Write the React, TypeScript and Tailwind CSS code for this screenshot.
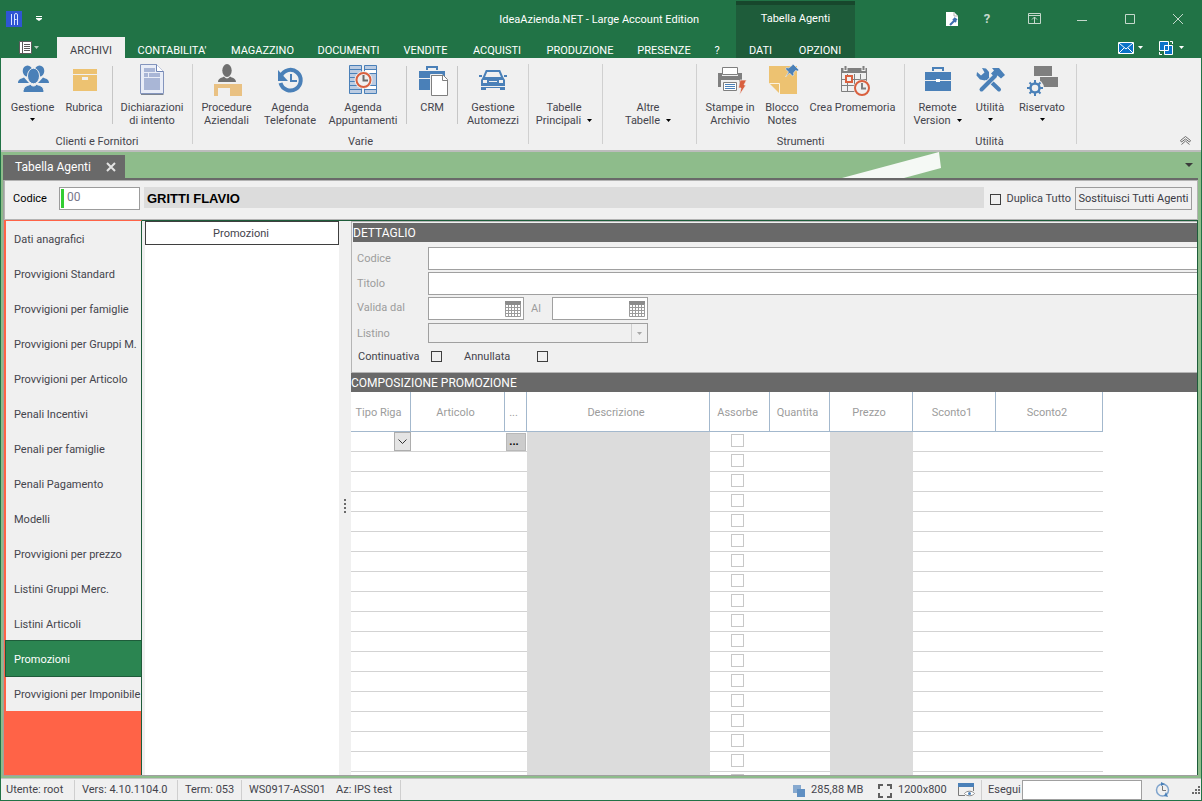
import React from 'react';
import clsx from 'clsx';

const BLUE = '#4a80b8';
const GRAY = '#7f7f7f';
const SAND = '#edc271';
const RED = '#d9603f';

const TABS = [
  { label: 'ARCHIVI', width: 'w-[68px]' },
  { label: "CONTABILITA'", width: 'w-[94px]' },
  { label: 'MAGAZZINO', width: 'w-[87px]' },
  { label: 'DOCUMENTI', width: 'w-[85px]' },
  { label: 'VENDITE', width: 'w-[69px]' },
  { label: 'ACQUISTI', width: 'w-[74px]' },
  { label: 'PRODUZIONE', width: 'w-[92px]' },
  { label: 'PRESENZE', width: 'w-[76px]' },
  { label: '?', width: 'w-[30px]' },
];

const SIDEBAR = [
  'Dati anagrafici', 'Provvigioni Standard', 'Provvigioni per famiglie', 'Provvigioni per Gruppi M.',
  'Provvigioni per Articolo', 'Penali Incentivi', 'Penali per famiglie', 'Penali Pagamento', 'Modelli',
  'Provvigioni per prezzo', 'Listini Gruppi Merc.', 'Listini Articoli', 'Promozioni', 'Provvigioni per Imponibile',
];

const COLUMNS = [
  { label: 'Tipo Riga', width: 'w-[60px]' },
  { label: 'Articolo', width: 'w-[94px]' },
  { label: '...', width: 'w-[22px]' },
  { label: 'Descrizione', width: 'w-[183px]' },
  { label: 'Assorbe', width: 'w-[60px]' },
  { label: 'Quantita', width: 'w-[60px]' },
  { label: 'Prezzo', width: 'w-[83px]' },
  { label: 'Sconto1', width: 'w-[83px]' },
  { label: 'Sconto2', width: 'w-[107px]' },
];

const ROWS = Array.from({ length: 18 }, (_, i) => i);

const Svg = ({ size = 32, children }: { size?: number; children: React.ReactNode }) => (
  <svg width={size} height={size} viewBox={`0 0 ${size} ${size}`} fill="none" className="shrink-0 overflow-visible" aria-hidden="true">
    {children}
  </svg>
);

const Caret = ({ className }: { className?: string }) => (
  <svg width="5" height="3" viewBox="0 0 5 3" className={clsx('inline-block shrink-0 fill-current', className)} aria-hidden="true">
    <path d="M0 0h5L2.5 3z" />
  </svg>
);

const PeopleIcon = () => (
  <Svg>
    <g fill={BLUE}>
      <ellipse cx="10.5" cy="7" rx="4.8" ry="5.5" />
      <ellipse cx="22.5" cy="7" rx="4.8" ry="5.5" />
      <path d="M1 19c0-4 3-4 6-5.500l5 5.500zM32 19c0-4-3-4-6-5.500l-5 5.500z" />
    </g>
    <g fill={BLUE} stroke="#f0f0f0">
      <path d="M6 28.500c0-6 4-7 7.500-8 2 2 4 2 6 0 4 1 7.500 2 7.500 8z" />
      <ellipse cx="16.500" cy="12" rx="6" ry="7.800" />
    </g>
  </Svg>
);

const BoxIcon = () => (
  <Svg>
    <path d="M5 5h24v5H5zM5 11h24v16H5zM14 13v3h6v-3z" fill={SAND} fillRule="evenodd" />
  </Svg>
);

const DocumentIcon = () => (
  <Svg>
    <path d="M4.500.5h16l7 7v22h-23z" fill="#e9edf7" stroke="#8495bd" />
    <path d="M20.500.5v7h7" fill="#fff" stroke="#6f84b5" />
    <path d="M8 4h11v4H8zM8 9h4v4H8zM13 9h11v4H13zM8 14h16v12H8z" fill="#a9b6d6" />
    <path d="M5 30.500h22.500" stroke="#7b8491" />
  </Svg>
);

const DeskIcon = () => (
  <Svg>
    <path d="M7 18c0-4 4-4 6-5.500 2 2.500 4 2.500 6 0 2 1.500 6 1.500 6 5.500z" fill="#6f6f6f" />
    <ellipse cx="16" cy="6.500" rx="4.700" ry="6.500" fill="#6f6f6f" />
    <path d="M3 20h28v12H19v-8H7v8H3z" fill="#e9c183" />
  </Svg>
);

const RecallIcon = () => (
  <Svg>
    <path d="M7 12a10.300 10.300 0 1 1-.5 7" stroke={BLUE} strokeWidth="4" />
    <path d="M4 6v11h10z" fill={BLUE} />
    <path d="M17 10v7h6" stroke={BLUE} strokeWidth="2" />
  </Svg>
);

const ScheduleIcon = () => (
  <Svg>
    <path d="M2.500 1.500h12v28h-12zM17.500 1.500h12v28h-12z" fill="#bccce2" stroke={BLUE} />
    <path d="M3 5.500h11M3 9.500h11M3 13.500h11M3 17.500h11M3 21.500h11M3 25.500h11M18 5.500h11M18 9.500h11M18 21.500h11M18 25.500h11" stroke={BLUE} />
    <path d="M18 6h11v3H18zM18 22h11v3H18z" fill="#fff" />
    <circle cx="16.500" cy="16" r="9" fill="#f0f0f0" />
    <circle cx="16.500" cy="16" r="7" fill="#f0f0f0" stroke={RED} strokeWidth="2" />
    <path d="M16.500 11v5.500H21" stroke="#6b6b6b" strokeWidth="2" />
  </Svg>
);

const CrmIcon = () => (
  <Svg>
    <path d="M11 6V3h10v3" stroke={BLUE} strokeWidth="2" />
    <path d="M3 7h26v7H3zM3 15h26v11H3z" fill={BLUE} />
    <path d="M15.500 11.500h12l4 4v16h-16z" fill="#fff" stroke={GRAY} />
    <path d="M14.500 32V10.500h12" stroke="#f0f0f0" />
    <path d="M26.500 11.500v5h5" stroke={GRAY} />
  </Svg>
);

const CarIcon = () => (
  <Svg>
    <path d="M6.500 14l3-7h13l3 7" stroke={BLUE} strokeWidth="2" />
    <path d="M2 11h3v2H2zM27 11h3v2h-3z" fill={BLUE} />
    <path d="M6 13h20l2 3v6H4v-6z" fill={BLUE} />
    <path d="M6 16h4v3H6zM22 16h4v3h-4zM12 17h8v1h-8z" fill="#f0f0f0" />
    <path d="M4 23h24v3h-5v-2H9v2H4z" fill={BLUE} />
  </Svg>
);

const PrinterIcon = () => (
  <Svg>
    <path d="M4 9h4v3h16V9h4v14H4z" fill={GRAY} />
    <path d="M8.500 3.500h15v7h-15z" fill="#fff" stroke={GRAY} />
    <path d="M8.500 17.500h15v9h-15z" fill="#fff" stroke="#f0f0f0" strokeWidth="3" />
    <path d="M9.500 18.500h13v8h-13z" fill="#fff" stroke={GRAY} />
    <path d="M11 20.500h10M11 22.500h10M11 24.500h10" stroke={BLUE} />
    <path d="M26 16h6.500l-2.500 5h2l-6.500 10 1.500-7h-2.500z" fill={RED} stroke="#f0f0f0" strokeWidth=".7" />
  </Svg>
);

const NoteIcon = () => (
  <Svg>
    <path d="M3 2h28v28H14L3 19z" fill={SAND} />
    <path d="M3.500 19.500h10V30" stroke="#fbf3e2" />
    <path d="M27 0l6 6-1.500 1-2-.5-2 2.500.5 2-1.500 1-3-3-4 4 3-5-3-3 1-1.500 2 .5 3-2z" fill={BLUE} stroke="#f0f0f0" strokeWidth=".6" />
  </Svg>
);

const ReminderIcon = () => (
  <Svg>
    <path d="M4 4h26v5H4z" fill={GRAY} />
    <path d="M8.500 1v6M26.500 1v6" stroke="#f0f0f0" strokeWidth="4" />
    <path d="M8.500 2v4M26.500 2v4" stroke={GRAY} strokeWidth="2" />
    <path d="M4.500 9v18.500h25V9M10.500 10v17M17.500 10v17M23.500 10v17M5 15.500h25M5 21.500h25" stroke={GRAY} />
    <path d="M9 12h6v6H9z" fill="#f0f0f0" stroke={RED} strokeWidth="2" />
    <circle cx="25" cy="24" r="8.500" fill="#f0f0f0" />
    <circle cx="25" cy="24" r="7" fill="#f0f0f0" stroke={RED} strokeWidth="2" />
    <path d="M25 19v5.500h4" stroke={GRAY} strokeWidth="2" />
  </Svg>
);

const BriefcaseIcon = () => (
  <Svg>
    <path d="M11 7V4h10v3" stroke={BLUE} strokeWidth="2" />
    <path d="M3 8h26v19H3z" fill={BLUE} />
    <path d="M3 16.500h26" stroke="#f0f0f0" />
    <path d="M14 15h4v3h-4z" fill="#fff" />
  </Svg>
);

const ToolsIcon = () => (
  <Svg>
    <path d="M12 13l13 12.500" stroke={BLUE} strokeWidth="4" strokeLinecap="round" />
    <path d="M8 4l4 .5 3 3.500v5l-4 3.500-5-1-3.500-4L3 8l4 3.500 3.500-3z" fill={BLUE} />
    <path d="M22 11L7 26" stroke="#f0f0f0" strokeWidth="6" />
    <path d="M21 12L7.500 25.500" stroke={BLUE} strokeWidth="4" strokeLinecap="round" />
    <path d="M18 4h7l6 7-4 3.500-3.500-3-2.500 2-4-4 3-3z" fill={BLUE} />
  </Svg>
);

const ReservedIcon = () => (
  <Svg>
    <path d="M8 2h18v10H8zM14 13h18v10H14z" fill={GRAY} />
    <circle cx="9" cy="24" r="9" fill="#f0f0f0" />
    <circle cx="9" cy="24" r="4.500" stroke={BLUE} strokeWidth="2.500" />
    <path d="M9 16v3M9 29v3M1 24h3M14 24h3M3.500 18.500l2 2M12.500 27.500l2 2M14.500 18.500l-2 2M5.500 27.500l-2 2" stroke={BLUE} strokeWidth="2" />
  </Svg>
);

interface ItemProps {
  icon?: React.ReactNode;
  lines: string[];
  width: string;
  menu?: 'inline' | 'below';
}

const RibbonItem: React.FC<ItemProps> = ({ icon, lines, width, menu }) => (
  <button type="button" className={clsx('flex shrink-0 flex-col items-center pt-1.5', width)}>
    <span className="h-8 w-8">{icon}</span>
    <span className="mt-[5px] text-center leading-[13px]">
      {lines.map((line, i) => (
        <span key={line} className="block whitespace-nowrap">
          {line}
          {menu === 'inline' && i === lines.length - 1 && <Caret className="mb-0.5 ml-1.5 text-black" />}
        </span>
      ))}
    </span>
    {menu === 'below' && <Caret className="mt-1 text-black" />}
  </button>
);

const Divider = () => <div className="mx-[3px] mt-2 h-[58px] w-px shrink-0 bg-[#c6c6c6]" />;

const RibbonGroup = ({ label, className, children }: { label?: string; className?: string; children: React.ReactNode }) => (
  <section className="flex shrink-0">
    <div className={clsx('flex flex-col', className)}>
      <div className="flex h-[77px]">{children}</div>
      <div className="text-center leading-[13px]">{label}</div>
    </div>
    <div className="mt-1.5 h-20 w-px bg-[#d0d0d0]" />
  </section>
);

const TitleBar = () => (
  <header className="flex h-[58px] shrink-0 bg-[#217346] pl-px text-white">
    <div className="flex shrink-0 flex-col">
      <div className="flex h-[37px] items-center justify-between pr-[37px] pl-[5px]">
        <div className="flex items-center gap-3">
          <Svg size={16}>
            <path d="M0 0h16v16H0z" fill="#2f55d4" />
            <path d="M5.500 3v11M8.500 14V4a1.500 1.500 0 0 1 3 0v10M8.500 8.500h2" stroke="#dce4ff" />
          </Svg>
          <button type="button" aria-label="Personalizza barra" className="p-0.5">
            <Svg size={6}>
              <path d="M0 0h6v1H0zM0 2h6v1L3 5 0 3z" fill="#fff" />
            </Svg>
          </button>
        </div>
        <h1 className="pt-1">IdeaAzienda.NET - Large Account Edition</h1>
      </div>
      <nav className="flex h-[21px] pr-1">
        <button type="button" aria-label="File" className="flex w-14 items-center justify-center gap-0.5">
          <Svg size={13}>
            <path d="M.5.5h12v12H.5z" fill="#fff" stroke="#5b5b5b" />
            <path d="M3.500 1v11M5 3.500h6M5 5.500h6M5 7.500h6M5 9.500h6" stroke="#5b5b5b" />
          </Svg>
          <Caret className="text-[#b5cfbf]" />
        </button>
        {TABS.map((tab, i) => (
          <button
            key={tab.label}
            type="button"
            className={clsx('pt-1.5 whitespace-nowrap', tab.width, i === 0 && 'bg-[#f0f0f0] text-[#3f3f46]')}
          >
            {tab.label}
          </button>
        ))}
      </nav>
    </div>
    <div className="mt-px flex shrink-0 flex-col border-t-4 border-[#17472c] bg-[#1e5c3a]">
      <div className="flex h-8 items-center justify-center pb-1">Tabella Agenti</div>
      <div className="flex h-[21px]">
        <button type="button" className="w-[49px] pt-1.5">DATI</button>
        <button type="button" className="w-[70px] pt-1.5">OPZIONI</button>
      </div>
    </div>
    <div className="flex flex-1 flex-col items-end">
      <div className="flex h-[37px] items-center text-[#c5d8cc]">
        <button type="button" aria-label="Impostazioni" className="flex w-9 justify-center">
          <Svg size={13}>
            <path d="M1 0h8l4 4v10H1z" fill="#fff" />
            <path d="M9 0v4h4" stroke="#b5b5b5" />
            <path d="M5 13l5-5M8 7l3 3M9 6l3 2" stroke="#3f6fb0" strokeWidth="2" />
          </Svg>
        </button>
        <button type="button" aria-label="Aiuto" className="w-9 text-[13px] font-bold">?</button>
        <button type="button" aria-label="Barra multifunzione" className="flex w-[58px] justify-center">
          <Svg size={13}>
            <path d="M.5 1.500h12v10H.5zM0 3.500h13M6.500 11V5M4 7.500L6.500 5 9 7.500" stroke="currentColor" />
          </Svg>
        </button>
        <button type="button" aria-label="Riduci" className="flex w-[38px] justify-center">
          <Svg size={10}><path d="M0 6.500h10" stroke="currentColor" /></Svg>
        </button>
        <button type="button" aria-label="Ingrandisci" className="flex w-[58px] justify-center">
          <Svg size={10}><path d="M.5.5h9v9h-9z" stroke="currentColor" /></Svg>
        </button>
        <button type="button" aria-label="Chiudi" className="flex w-[43px] justify-start pl-[14px]">
          <Svg size={10}><path d="M0 0l10 10M10 0L0 10" stroke="currentColor" /></Svg>
        </button>
      </div>
      <div className="flex h-[21px] items-center gap-4 pr-[18px]">
        <button type="button" aria-label="Posta" className="flex items-center gap-1">
          <svg width="16" height="12" viewBox="0 0 16 12" fill="none" aria-hidden="true">
            <path d="M.5.5h15v11H.5z" fill="#0a72c8" stroke="#fff" />
            <path d="M1 1l7 6 7-6M1 11l5-5M15 11l-5-5" stroke="#fff" />
          </svg>
          <Caret />
        </button>
        <button type="button" aria-label="Finestre" className="flex items-center gap-1.5">
          <Svg size={14}>
            <path d="M.5.5h9v9h-9zM5.500 4.500h8v9h-8z" fill="#0a72c8" stroke="#fff" />
            <path d="M11 .5h2.500V3M.5 11v2.500H3" stroke="#fff" />
          </Svg>
          <Caret />
        </button>
      </div>
    </div>
  </header>
);

const Ribbon = () => (
  <div className="flex h-[94px] shrink-0 justify-between border-b-2 border-[#bcbcbc] bg-[#f0f0f0]">
    <div className="flex">
      <RibbonGroup label="Clienti e Fornitori" className="pr-1 pl-[5px]">
        <RibbonItem icon={<PeopleIcon />} lines={['Gestione']} width="w-[53px]" menu="below" />
        <RibbonItem icon={<BoxIcon />} lines={['Rubrica']} width="w-[50px]" />
        <Divider />
        <RibbonItem icon={<DocumentIcon />} lines={['Dichiarazioni', 'di intento']} width="w-[72px]" />
      </RibbonGroup>
      <RibbonGroup label="Varie" className="px-[3px]">
        <RibbonItem icon={<DeskIcon />} lines={['Procedure', 'Aziendali']} width="w-[61px]" />
        <RibbonItem icon={<RecallIcon />} lines={['Agenda', 'Telefonate']} width="w-[66px]" />
        <RibbonItem icon={<ScheduleIcon />} lines={['Agenda', 'Appuntamenti']} width="w-[80px]" />
        <Divider />
        <RibbonItem icon={<CrmIcon />} lines={['CRM']} width="w-[44px]" />
        <Divider />
        <RibbonItem icon={<CarIcon />} lines={['Gestione', 'Automezzi']} width="w-[64px]" />
      </RibbonGroup>
      <RibbonGroup className="pr-[3px]">
        <RibbonItem lines={['Tabelle', 'Principali']} width="w-[70px]" menu="inline" />
      </RibbonGroup>
      <RibbonGroup className="pr-[3px]">
        <RibbonItem lines={['Altre', 'Tabelle']} width="w-[90px]" menu="inline" />
      </RibbonGroup>
      <RibbonGroup label="Strumenti" className="px-1">
        <RibbonItem icon={<PrinterIcon />} lines={['Stampe in', 'Archivio']} width="w-[58px]" />
        <RibbonItem icon={<NoteIcon />} lines={['Blocco', 'Notes']} width="w-[46px]" />
        <RibbonItem icon={<ReminderIcon />} lines={['Crea Promemoria']} width="w-[95px]" />
      </RibbonGroup>
      <RibbonGroup label="Utilità" className="pr-[7px] pl-[5px]">
        <RibbonItem icon={<BriefcaseIcon />} lines={['Remote', 'Version']} width="w-[55px]" menu="inline" />
        <RibbonItem icon={<ToolsIcon />} lines={['Utilità']} width="w-[50px]" menu="below" />
        <RibbonItem icon={<ReservedIcon />} lines={['Riservato']} width="w-[54px]" menu="below" />
      </RibbonGroup>
    </div>
    <button type="button" aria-label="Comprimi" className="flex items-end pr-2.5 pb-1">
      <Svg size={11}>
        <path d="M.5 5.500l5-4 5 4-1 1.500-4-3-4 3zM1.500 9.500l4-3.500 4 3.500" stroke="#6b6b6b" />
      </Svg>
    </button>
  </div>
);

const DocumentTabs = () => (
  <div className="flex h-7 shrink-0 items-end justify-between border-b-2 border-[#696969]">
    <button type="button" className="flex h-[23px] w-[122px] items-center justify-between bg-[#696969] pr-2.5 pl-3 text-white">
      <span className="text-[12px]">Tabella Agenti</span>
      <Svg size={8}>
        <path d="M0 0l8 8M8 0L0 8" stroke="#e4e4e4" strokeWidth="2" />
      </Svg>
    </button>
    <div className="flex gap-[244px] pr-[5px]">
      <svg width="99" height="26" viewBox="0 0 99 26" aria-hidden="true">
        <path d="M0 26L97 0l2 16-37 10z" fill="#f5f9f5" />
      </svg>
      <button type="button" aria-label="Elenco schede">
        <svg width="8" height="4" viewBox="0 0 8 4" aria-hidden="true">
          <path d="M0 0h8L4 4z" fill="#3b3b3b" />
        </svg>
      </button>
    </div>
  </div>
);

const CodeBar = () => (
  <div className="flex h-10 shrink-0 items-start border border-[#b3b3b3] bg-[#f0f0f0] pt-1.5 pr-[5px] pl-2">
    <label htmlFor="agente" className="w-[46px] pt-1 leading-4 text-black">Codice</label>
    <div className="flex h-[23px] w-[81px] border border-[#9c9c9c] bg-white p-px">
      <div className="w-[3px] shrink-0 bg-[#32cd32]" />
      <input id="agente" defaultValue="00" className="h-4 w-full min-w-0 pl-[3px] text-[12px] text-[#77778a] outline-none" />
    </div>
    <div className="mr-1.5 ml-1 h-[21px] flex-1 bg-[#dcdcdc] px-[3px] font-['Liberation_Sans'] text-[13px] leading-[23px] font-bold text-black">
      GRITTI FLAVIO
    </div>
    <label className="flex items-center gap-[5px] pt-1 pr-1 leading-4">
      <input type="checkbox" className="h-[11px] w-[11px] appearance-none border border-[#3f3f3f]" />
      Duplica Tutto
    </label>
    <button type="button" className="h-[23px] w-[117px] border border-[#9c9c9c] pt-0.5 whitespace-nowrap text-[#3a3a44]">
      Sostituisci Tutti Agenti
    </button>
  </div>
);

const Sidebar = () => (
  <nav className="w-[138px] shrink-0 border-t border-r border-l-2 border-t-[#ff6347] border-r-[#1e5c3a] border-l-[#ff6347] bg-[#ff6347]">
    {SIDEBAR.map(item => (
      <button
        key={item}
        type="button"
        className={clsx(
          'block h-[35px] w-full pt-[3px] pl-2 text-left whitespace-nowrap',
          item === 'Promozioni' ? 'bg-[#2b8551] text-white outline-1 outline-[#1e5c3a]' : 'bg-[#f0f0f0]'
        )}
      >
        {item}
      </button>
    ))}
  </nav>
);

const DateField = ({ id }: { id: string }) => (
  <div className="flex h-[23px] w-24 items-center border border-[#a0a0a0] bg-white pr-0.5">
    <input id={id} className="h-full w-full min-w-0 px-1 outline-none" />
    <button type="button" aria-label="Calendario">
      <Svg size={16}>
        <path d="M0 0h16v4H0z" fill="#8c8c8c" />
        <path d="M.5 3v12.500h15V3M3.500 4v11M6.500 4v11M9.500 4v11M12.500 4v11M1 6.500h14M1 9.500h14M1 12.500h14" stroke="#9b9b9b" />
      </Svg>
    </button>
  </div>
);

const DetailForm = () => (
  <section className="shrink-0 border-t border-b border-l border-[#b5b5b5] bg-[#f0f0f0] pb-1.5">
    <h2 className="mt-px ml-px h-[19px] bg-[#696969] text-[12px] leading-[21px] text-white">DETTAGLIO</h2>
    <div className="mt-[5px] flex flex-col gap-0.5 pl-[5px] text-[#9c9c9c]">
      <div className="flex items-center">
        <label htmlFor="codice" className="w-[71px] pt-0.5">Codice</label>
        <input id="codice" className="h-[23px] flex-1 border border-r-0 border-[#a0a0a0] bg-white px-1" />
      </div>
      <div className="flex items-center">
        <label htmlFor="titolo" className="w-[71px] pt-0.5">Titolo</label>
        <input id="titolo" className="h-[23px] flex-1 border border-r-0 border-[#a0a0a0] bg-white px-1" />
      </div>
      <div className="flex items-center">
        <label htmlFor="valida" className="w-[71px]">Valida dal</label>
        <DateField id="valida" />
        <label htmlFor="al" className="w-7 pt-0.5 pl-[7px]">Al</label>
        <DateField id="al" />
      </div>
      <div className="flex items-center pt-px">
        <label htmlFor="listino" className="w-[71px] pt-0.5">Listino</label>
        <div className="flex h-5 w-[220px] border border-[#a0a0a0]">
          <select id="listino" disabled className="flex-1 appearance-none" />
          <span className="flex w-4 items-center justify-center border-l border-[#cfcfcf] text-[#a8a8a8]">
            <Caret />
          </span>
        </div>
      </div>
      <div className="flex h-[21px] items-center pt-0.5 pl-px text-[#44444c]">
        <label htmlFor="continuativa" className="w-[73px] pt-0.5">Continuativa</label>
        <input id="continuativa" type="checkbox" className="h-[11px] w-[11px] appearance-none border border-[#3f3f3f]" />
        <label htmlFor="annullata" className="ml-[22px] w-[73px] pt-0.5">Annullata</label>
        <input id="annullata" type="checkbox" className="h-[11px] w-[11px] appearance-none border border-[#3f3f3f]" />
      </div>
    </div>
  </section>
);

const PromoGrid = () => (
  <section className="flex min-h-0 flex-1 flex-col overflow-hidden bg-white">
    <h2 className="h-[19px] shrink-0 bg-[#696969] text-[12px] leading-[21px] text-white">COMPOSIZIONE PROMOZIONE</h2>
    <table className="w-[752px] table-fixed border-separate border-spacing-0">
      <thead>
        <tr className="h-10">
          {COLUMNS.map(col => (
            <th key={col.label} className={clsx('border-r border-b border-[#a3b8cd] pt-1 pr-1 pb-0 pl-0 font-normal text-[#9c9c9c]', col.width)}>
              {col.label}
            </th>
          ))}
        </tr>
      </thead>
      <tbody>
        {ROWS.map(row => (
          <tr key={row} className="h-5">
            <td className="border-b border-[#d3d3d3] p-0">
              {row === 0 && (
                <button type="button" aria-label="Tipo riga" className="ml-auto flex h-[19px] w-[17px] items-center justify-center border border-[#adadad] bg-[#e4e4e4]">
                  <Svg size={9}>
                    <path d="M.5 2.500l4 4 4-4" stroke="#333" />
                  </Svg>
                </button>
              )}
            </td>
            <td className="border-b border-[#d3d3d3] p-0" />
            <td className="border-b border-[#d3d3d3] p-0">
              {row === 0 && (
                <button type="button" className="ml-px block h-[18px] w-5 border border-[#b8b8b8] bg-[#cccccc] pr-1 leading-4 font-bold text-black">...</button>
              )}
            </td>
            <td className="bg-[#dcdcdc] p-0" />
            <td className="border-b border-[#d3d3d3] p-0">
              <input
                type="checkbox"
                aria-label={`Assorbe riga ${row + 1}`}
                className="mr-auto mb-0.5 ml-[21px] block h-[13px] w-[13px] appearance-none border border-[#c8c8c8]"
              />
            </td>
            <td className="border-b border-[#d3d3d3] p-0" />
            <td className="bg-[#dcdcdc] p-0" />
            <td className="border-b border-[#d3d3d3] p-0" />
            <td className="border-b border-[#d3d3d3] p-0" />
          </tr>
        ))}
      </tbody>
    </table>
  </section>
);

const StatusBar = () => (
  <footer className="flex h-[22px] shrink-0 items-center justify-between border-t border-[#c4c4c4] bg-[#f0f0f0]">
    <div className="flex h-5 items-center whitespace-nowrap">
      <span className="flex h-full w-[74px] items-center border-r border-[#cfcfcf] pt-0.5 pl-[5px]">Utente: root</span>
      <span className="flex h-full w-[103px] items-center border-r border-[#cfcfcf] pt-0.5 pl-[7px]">Vers: 4.10.1104.0</span>
      <span className="flex h-full w-16 items-center border-r border-[#cfcfcf] pt-0.5 pl-[7px]">Term: 053</span>
      <span className="flex h-full w-[159px] items-center border-r border-[#cfcfcf] pt-0.5 pl-[7px]">
        <span className="w-[87px]">WS0917-ASS01</span>
        <span>Az: IPS test</span>
      </span>
    </div>
    <div className="flex h-5 items-center whitespace-nowrap">
      <span className="flex w-[85px] items-center gap-1.5 pt-0.5">
        <Svg size={12}>
          <path d="M0 0h8v8H0z" fill="#87a9cf" />
          <path d="M4 4h8v8H4z" fill="#5f8fc2" />
        </Svg>
        285,88 MB
      </span>
      <span className="flex w-20 items-center gap-1.5 pt-0.5">
        <Svg size={14}>
          <path d="M1 5V1h4M9 1h4v4M13 9v4H9M5 13H1V9" stroke="#5f5f5f" strokeWidth="2" />
        </Svg>
        1200x800
      </span>
      <span className="flex h-full w-6 items-center border-r border-[#cfcfcf]">
        <Svg size={16}>
          <path d="M.5 2v11.500H7M15.500 2v7" stroke="#7a7a7a" />
          <path d="M0 1h16v4H0z" fill={BLUE} />
          <path d="M6.500 11.500c2-3 8-3 10 0-2 3-8 3-10 0z" fill="#fff" stroke="#8a8a8a" />
          <circle cx="11.500" cy="11.500" r="1.500" fill={BLUE} />
        </Svg>
      </span>
      <label htmlFor="esegui" className="w-10 pt-0.5 pl-1.5">Esegui</label>
      <input id="esegui" className="h-5 w-[120px] border border-[#a0a0a0] bg-white px-1" />
      <button type="button" aria-label="Cronologia" className="mr-[21px] ml-[13px]">
        <Svg size={15}>
          <circle cx="7.500" cy="8" r="6" stroke="#7fa4cd" strokeWidth="1.500" />
          <path d="M7.500 4v4.500H11" stroke="#777" />
          <path d="M6 0l4 2-4 2zM11 10l2 5-4-1z" fill={BLUE} />
        </Svg>
      </button>
      <Svg size={10}>
        <path d="M7 1h2v2H7zM4 4h2v2H4zM7 4h2v2H7zM1 7h2v2H1zM4 7h2v2H4zM7 7h2v2H7z" fill="#6a6a6a" />
      </Svg>
    </div>
  </footer>
);

export default function App() {
  return (
    <div className="flex h-screen flex-col overflow-hidden bg-[#217346] font-[Roboto,sans-serif] text-[11px] text-[#44444c]">
      <TitleBar />
      <div className="flex min-h-0 flex-1 flex-col border-r border-b border-l border-[#217346]">
        <Ribbon />
        <div className="flex min-h-0 flex-1 flex-col bg-[#8ebc8b] pr-[3px] pb-0.5 pl-0.5">
          <DocumentTabs />
          <div className="flex min-h-0 flex-1 flex-col border-b border-l border-[#a0a0a0]">
            <CodeBar />
            <main className="flex min-h-0 flex-1 bg-[#f0f0f0]">
              <Sidebar />
              <div className="flex min-w-0 flex-1 border-t border-r border-[#1e5c3a] pl-[3px]">
                <div className="w-[194px] shrink-0 bg-white">
                  <button type="button" className="block h-6 w-full border border-[#3f3f3f] bg-white pt-0.5 pr-0.5">Promozioni</button>
                </div>
                <div className="flex w-3 shrink-0 flex-col items-center justify-center pt-4">
                  <svg width="2" height="14" viewBox="0 0 2 14" aria-hidden="true">
                    <path d="M0 0h2v2H0zM0 4h2v2H0zM0 8h2v2H0zM0 12h2v2H0z" fill="#6a6a6a" />
                  </svg>
                </div>
                <div className="flex min-w-0 flex-1 flex-col">
                  <DetailForm />
                  <PromoGrid />
                </div>
              </div>
            </main>
          </div>
        </div>
        <StatusBar />
      </div>
    </div>
  );
}
